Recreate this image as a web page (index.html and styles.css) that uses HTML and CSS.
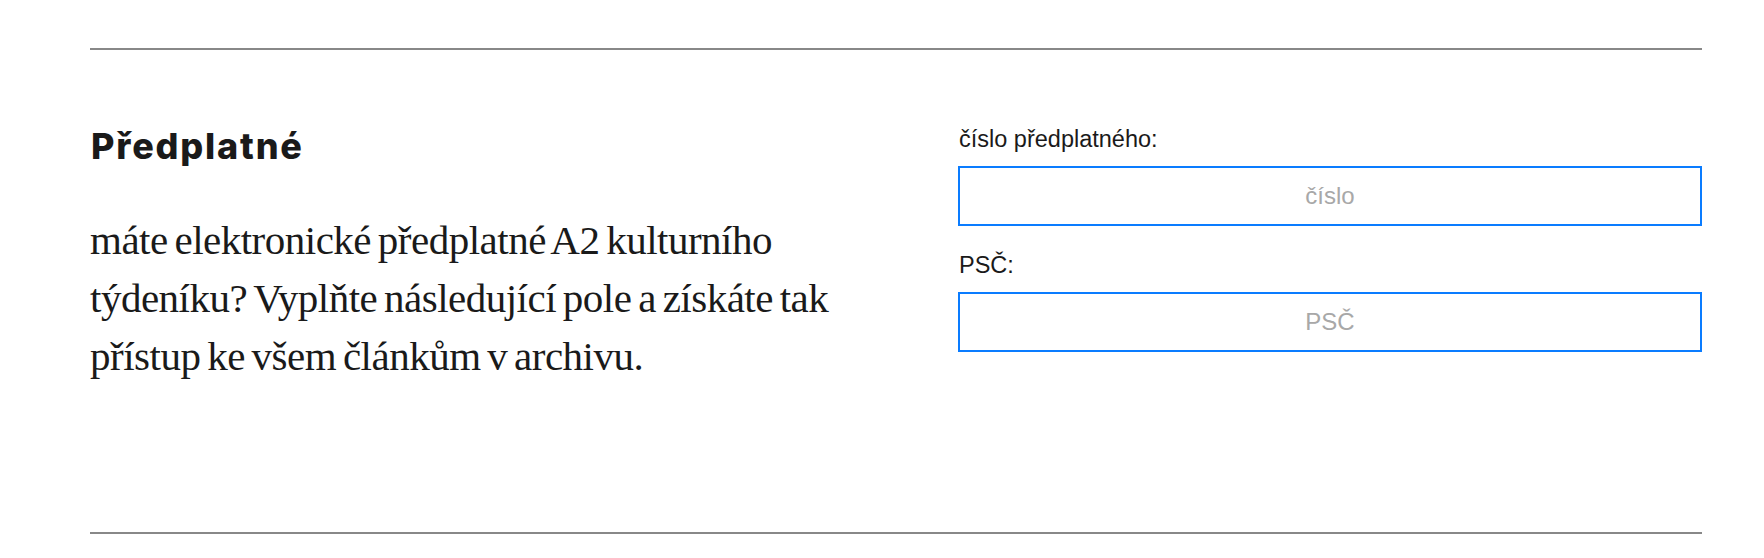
FILE: index.html
```html
<!DOCTYPE html>
<html lang="cs">
    <head>
        <meta charset="utf-8">
        <title>Předplatné</title>
        <link rel="stylesheet" href="styles.css">
    </head>

    <body>
        <div class="subscription">
            <div class="intro">
                <h2>Předplatné</h2>
                <p>máte elektronické předplatné A2 kulturního týdeníku? Vyplňte následující pole a získáte tak přístup ke všem článkům v archivu.</p>
            </div>

            <form method="post" id="subscriberLogin" class="subForm">
                <label for="subNum">číslo předplatného:</label>
                <input type="text" id="subNum" name="subNum" placeholder="číslo">
                <label for="zip">PSČ:</label>
                <input type="text" id="zip" name="zip" placeholder="PSČ">
            </form>
        </div>
    </body>
</html>
```

FILE: styles.css
```css
body {
    margin: 0;
    background-color: white;
    color: #1a1a1a;
}

.subscription {
    width: 1612px;
    margin-left: 90px;
    margin-top: 48px;
    height: 486px;
    border-top: 2px solid #888888;
    border-bottom: 2px solid #888888;
    box-sizing: border-box;
    display: grid;
    grid-template-columns: 1fr 1fr;
    column-gap: 124px;
    align-items: start;
}

.intro h2 {
    font-family: "Inter", sans-serif;
    font-weight: 800;
    font-size: 36px;
    letter-spacing: 1.8px;
    margin: 76px 0 0 1px;
    line-height: 40px;
}

.intro p {
    font-family: "Liberation Serif", serif;
    font-size: 41px;
    line-height: 58px;
    margin: 45px 0 0 0;
    letter-spacing: -0.5px;
    word-spacing: -3px;
}

.subForm {
    display: flex;
    flex-direction: column;
    margin-top: 76px;
}

.subForm label {
    font-family: "Liberation Sans", Arial, sans-serif;
    font-size: 23.5px;
    line-height: 26px;
    margin-left: 1px;
    margin-bottom: 14px;
}

.subForm input {
    height: 60px;
    box-sizing: border-box;
    border: 2px solid #0a7cff;
    background: white;
    font-family: "Liberation Sans", Arial, sans-serif;
    font-size: 24px;
    text-align: center;
    margin-bottom: 26px;
    outline: none;
}

.subForm input::placeholder {
    color: #a8a8a8;
}
```
